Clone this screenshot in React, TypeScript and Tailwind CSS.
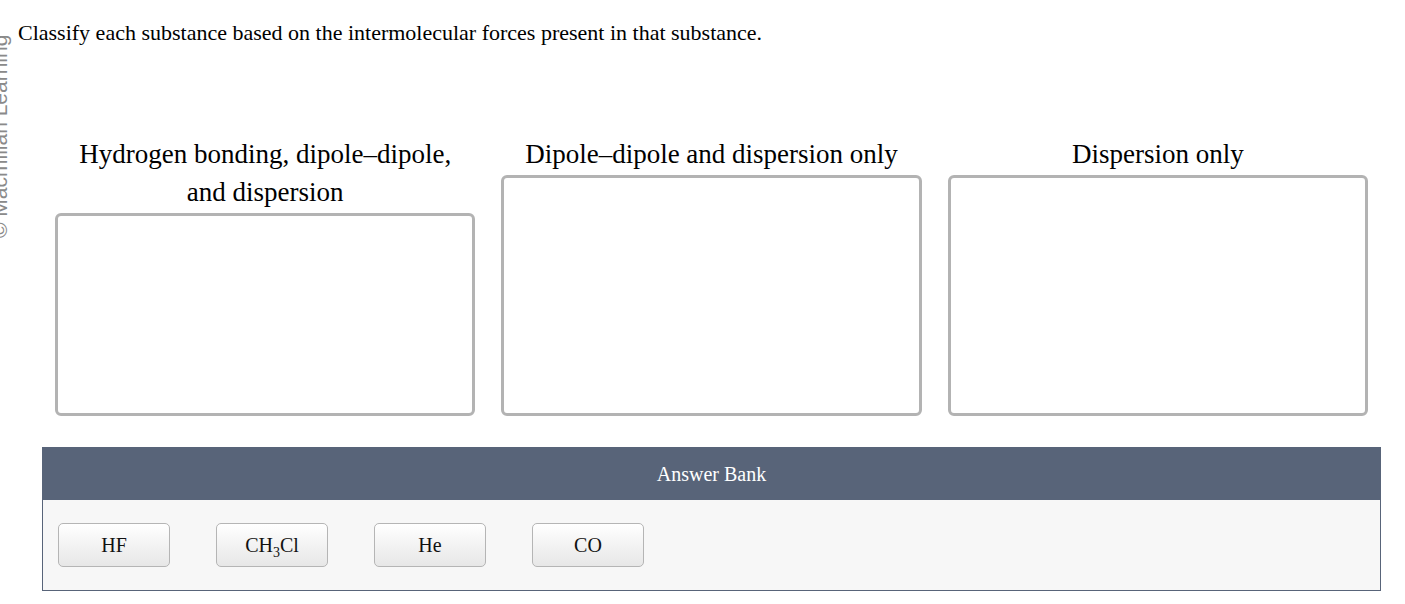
import React from "react";

function Chip({ children }: { children: React.ReactNode }) {
  return (
    <div className="flex h-[44px] w-[112px] items-center justify-center rounded-[5px] border border-[#b5b5b5] bg-gradient-to-b from-[#ffffff] to-[#e7e7e7] text-[20px] leading-none text-[#111]">
      {children}
    </div>
  );
}

function Column({ title, children }: { title?: React.ReactNode; children?: React.ReactNode }) {
  return (
    <div className="flex flex-col">
      <div className="mb-[2px] text-center text-[27px] leading-[38px] text-black">{title}</div>
      <div className="flex-1 rounded-[6px] border-[3px] border-[#b3b3b3] bg-white">{children}</div>
    </div>
  );
}

export default function App() {
  return (
    <div
      className="relative h-[604px] w-full overflow-hidden bg-white"
      style={{ fontFamily: '"Liberation Serif", "Times New Roman", serif' }}
    >
      <div
        className="absolute left-[-11px] top-[238px] origin-top-left -rotate-90 whitespace-nowrap text-[21px] leading-[21px] text-[#8a8a8a]"
        style={{ fontFamily: '"Liberation Sans", Arial, sans-serif' }}
      >
        © Macmillan Learning
      </div>

      <div className="pl-[18px] pt-[18px] text-[22px] leading-[30px] text-black">
        Classify each substance based on the intermolecular forces present in that substance.
      </div>

      <div className="ml-[42px] mt-[87px] w-[1339px]">
        <div className="grid h-[281px] grid-cols-3 gap-[26px] px-[13px]">
          <Column
            title={
              <>
                Hydrogen bonding, dipole–dipole,
                <br />
                and dispersion
              </>
            }
          />
          <Column title="Dipole–dipole and dispersion only" />
          <Column title="Dispersion only" />
        </div>

        <div className="mt-[31px]">
          <div className="flex h-[53px] items-center justify-center bg-[#586479] text-[20px] text-white">
            Answer Bank
          </div>
          <div className="flex h-[91px] gap-[46px] border-x border-b border-[#586479] bg-[#f7f7f7] pl-[15px] pt-[23px]">
            <Chip>HF</Chip>
            <Chip>
              <span>
                CH<span className="relative top-[5px] text-[14px]">3</span>Cl
              </span>
            </Chip>
            <Chip>He</Chip>
            <Chip>CO</Chip>
          </div>
        </div>
      </div>
    </div>
  );
}
